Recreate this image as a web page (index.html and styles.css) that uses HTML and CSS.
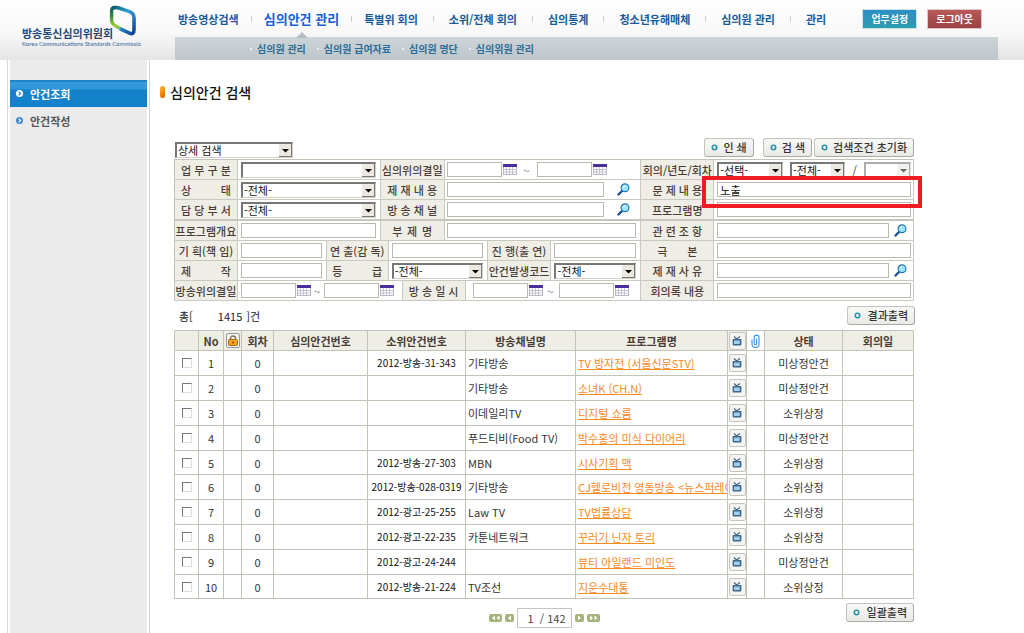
FILE: index.html
```html
<!DOCTYPE html>
<html lang="ko">
<head>
<meta charset="utf-8">
<title>심의안건 검색</title>
<link rel="stylesheet" href="styles.css">
</head>
<body>
<svg class="sprite" aria-hidden="true">
  <symbol id="cal" viewBox="0 0 14 11"><rect x=".5" y=".5" width="13" height="10" fill="#fff" stroke="#b9b9c9"/><path d="M0 0h14v3H0z" fill="#4a2f9c"/><path d="M3.500 3v7M6.500 3v7M9.500 3v7M1 5.500h12M1 8h12" stroke="#c3c3d2"/></symbol>
  <symbol id="mag" viewBox="0 0 13 13"><path d="M1.500 11.500L5 8" stroke="#1d4f9c" stroke-width="2.400" stroke-linecap="round"/><circle cx="8" cy="4.800" r="3.900" fill="#9fe6fb" stroke="#2277b5" stroke-width="1.200"/><path d="M6 4.500Q6.500 3 8 2.800" stroke="#fff" fill="none"/></symbol>
  <symbol id="tv" viewBox="0 0 10 10"><path d="M2 .5L4.500 3L8 .5" fill="none" stroke="#42627e" stroke-width="1.100"/><rect x=".6" y="3" width="8.800" height="6.400" rx=".8" fill="#41678a"/><rect x="2" y="4.500" width="5.800" height="3.500" fill="#9fd0ef"/></symbol>
  <symbol id="dot" viewBox="0 0 7 7"><circle cx="3.500" cy="3.500" r="2.200" fill="#fff" stroke="#2592ac" stroke-width="1.600"/></symbol>
  <symbol id="bullet" viewBox="0 0 7 7"><circle cx="3.500" cy="3.500" r="3.500" fill="currentColor"/><path d="M2.700 1.700l1.800 1.800l-1.800 1.800" fill="none" stroke="var(--mark)" stroke-width="1.200"/></symbol>
</svg>

<header class="header">
  <a class="logo" href="#">
    <svg class="logo-mark" viewBox="0 0 28 32" aria-hidden="true">
      <defs>
        <linearGradient id="lg" x1="0" y1="0" x2="1" y2="1"><stop offset="0" stop-color="#0b5a6c"/><stop offset=".4" stop-color="#2a9fd4"/><stop offset=".6" stop-color="#2e86cc"/><stop offset="1" stop-color="#0c3f93"/></linearGradient>
        <linearGradient id="lg2" x1="0" y1="0" x2="0" y2="1"><stop offset="0" stop-color="#0b5a5c"/><stop offset=".35" stop-color="#2f8c3c"/><stop offset=".8" stop-color="#a4d03c"/><stop offset="1" stop-color="#3f9ab0"/></linearGradient>
      </defs>
      <path d="M7 2.600Q2.600 1.800 2.600 6V15.500Q2.800 19 6 20.500L16 26" fill="none" stroke="url(#lg2)" stroke-width="3.400"/>
      <path d="M3.500 3.500Q5 1.900 9 2.800L20.500 6.600Q25 8.200 25 13V24.500Q25 30 20.500 28.200L11 23.800" fill="none" stroke="url(#lg)" stroke-width="3.600"/>
    </svg>
    <span class="logo-name">방송통신심의위원회</span>
    <span class="logo-sub">Korea Communications Standards Commissio</span>
  </a>
  <div class="header-main">
    <div class="topline">
      <nav class="nav">
        <a href="#">방송영상검색</a>
        <a href="#" class="current">심의안건 관리</a>
        <a href="#">특별위 회의</a>
        <a href="#">소위/전체 회의</a>
        <a href="#">심의통계</a>
        <a href="#">청소년유해매체</a>
        <a href="#">심의원 관리</a>
        <a href="#">관리</a>
      </nav>
      <div class="account">
        <button class="acct" type="button">업무설정</button>
        <button class="acct logout" type="button">로그아웃</button>
      </div>
    </div>
    <nav class="subnav">
      <a href="#">심의원 관리</a>
      <a href="#">심의원 급여자료</a>
      <a href="#">심의원 명단</a>
      <a href="#">심의위원 관리</a>
    </nav>
  </div>
</header>

<div class="body">
  <aside class="sidebar">
    <nav class="side-menu">
      <a class="side-link active" href="#"><svg class="i7"><use href="#bullet"/></svg>안건조회</a>
      <a class="side-link" href="#"><svg class="i7"><use href="#bullet"/></svg>안건작성</a>
    </nav>
  </aside>

  <main class="main">
    <h1 class="title">심의안건 검색</h1>

    <form class="search">
      <div class="toolbar">
        <select class="sel mode" aria-label="검색 방식"><option>상세 검색</option></select>
        <div class="actions">
          <button class="btn" type="button"><svg class="i7"><use href="#dot"/></svg>인 쇄</button>
          <button class="btn find" type="button"><svg class="i7"><use href="#dot"/></svg>검 색</button>
          <button class="btn" type="reset"><svg class="i7"><use href="#dot"/></svg>검색조건 초기화</button>
        </div>
      </div>

      <div class="fields">
        <div class="row r-a">
          <label for="f1">업 무 구 분</label>
          <div class="val"><select class="sel" id="f1"><option></option></select></div>
          <label for="f2">심의위의결일</label>
          <div class="val"><input class="date" id="f2"><svg class="cal"><use href="#cal"/></svg><span class="tilde wide">~</span><input class="date" aria-label="심의위의결일 끝"><svg class="cal"><use href="#cal"/></svg></div>
          <label for="f3">회의/년도/회차</label>
          <div class="val three"><select class="sel" id="f3"><option>-선택-</option></select><select class="sel" aria-label="년도"><option>-전체-</option></select><span>/</span><select class="sel off" aria-label="회차" disabled><option></option></select></div>
        </div>
        <div class="row r-a">
          <label for="f4"><span class="spread">상 태</span></label>
          <div class="val"><select class="sel" id="f4"><option>-전체-</option></select></div>
          <label for="f5">제 재 내 용</label>
          <div class="val lookup"><input id="f5"><svg class="mag"><use href="#mag"/></svg></div>
          <label for="f6">문 제 내 용</label>
          <div class="val marked"><input id="f6" value="노출"></div>
        </div>
        <div class="row r-a">
          <label for="f7">담 당 부 서</label>
          <div class="val"><select class="sel" id="f7"><option>-전체-</option></select></div>
          <label for="f8">방 송 채 널</label>
          <div class="val lookup"><input id="f8"><svg class="mag"><use href="#mag"/></svg></div>
          <label for="f9">프로그램명</label>
          <div class="val"><input id="f9"></div>
        </div>
        <div class="row r-a split">
          <label for="f10">프로그램개요</label>
          <div class="val"><input id="f10"></div>
          <label for="f11"><span class="spread short">부 제 명</span></label>
          <div class="val"><input id="f11"></div>
          <label for="f12">관 련 조 항</label>
          <div class="val lookup tight"><input id="f12"><svg class="mag"><use href="#mag"/></svg></div>
        </div>
        <div class="row r-b">
          <label for="f13">기 획(책 임)</label>
          <div class="val"><input id="f13"></div>
          <label for="f14">연 출(감 독)</label>
          <div class="val"><input id="f14"></div>
          <label for="f15">진 행(출 연)</label>
          <div class="val"><input id="f15"></div>
          <label for="f16"><span class="spread short">극 본</span></label>
          <div class="val"><input id="f16"></div>
        </div>
        <div class="row r-b">
          <label for="f17"><span class="spread">제 작</span></label>
          <div class="val"><input id="f17"></div>
          <label for="f18"><span class="spread">등 급</span></label>
          <div class="val"><select class="sel" id="f18"><option>-전체-</option></select></div>
          <label for="f19">안건발생코드</label>
          <div class="val"><select class="sel" id="f19"><option>-전체-</option></select></div>
          <label for="f20">제 재 사 유</label>
          <div class="val lookup tight"><input id="f20"><svg class="mag"><use href="#mag"/></svg></div>
        </div>
        <div class="row r-c">
          <label for="f21">방송위의결일</label>
          <div class="val"><input class="date" id="f21"><svg class="cal"><use href="#cal"/></svg><span class="tilde">~</span><input class="date" aria-label="방송위의결일 끝"><svg class="cal"><use href="#cal"/></svg></div>
          <label for="f22">방 송 일 시</label>
          <div class="val inset"><input class="date" id="f22"><svg class="cal"><use href="#cal"/></svg><span class="tilde mid">~</span><input class="date" aria-label="방송일시 끝"><svg class="cal"><use href="#cal"/></svg></div>
          <label for="f23">회의록 내용</label>
          <div class="val"><input id="f23"></div>
        </div>
      </div>
    </form>

    <div class="summary">
      <p class="total">총[<span class="count">1415</span>]건</p>
      <button class="btn" type="button"><svg class="i7"><use href="#dot"/></svg>결과출력</button>
    </div>

    <table class="list">
      <colgroup><col class="c-check"><col class="c-no"><col class="c-icon"><col class="c-round"><col class="c-case"><col class="c-sub"><col class="c-chan"><col class="c-prog"><col class="c-tv"><col class="c-icon"><col class="c-state"><col class="c-date"></colgroup>
      <thead>
        <tr>
          <th></th><th>No</th>
          <th class="icon"><span class="tile lock"><svg viewBox="0 0 10 11" width="10" height="11"><path d="M2.500 5V3.500a2.500 2.500 0 0 1 5 0V5" fill="none" stroke="#8b7650" stroke-width="1.400"/><rect x=".5" y="4.500" width="9" height="6" rx="1" fill="#f2a51c" stroke="#a8690c"/><circle cx="5" cy="7.500" r="1" fill="#b03c10"/></svg></span></th>
          <th>회차</th><th>심의안건번호</th><th>소위안건번호</th><th>방송채널명</th><th>프로그램명</th>
          <th class="icon"><span class="tile"><svg class="tv"><use href="#tv"/></svg></span></th>
          <th class="icon clip"><svg viewBox="0 0 9 14" width="9" height="14"><path d="M1 5.500V10a3.400 3.400 0 0 0 7 0V3.500a2.400 2.400 0 0 0-4.800 0V9.500a1.200 1.200 0 0 0 2.400 0V4.500" fill="none" stroke="#3d8fdc" stroke-width="1.100"/></svg></th>
          <th>상태</th><th>회의일</th>
        </tr>
      </thead>
      <tbody>
        <tr><td><input type="checkbox" aria-label="1"></td><td>1</td><td></td><td>0</td><td></td><td class="num">2012-방송-31-343</td><td class="l">기타방송</td><td class="l"><a href="#">TV 방자전 (서울신문STV)</a></td><td class="icon"><button class="tile" type="button" aria-label="영상"><svg class="tv"><use href="#tv"/></svg></button></td><td></td><td>미상정안건</td><td></td></tr>
        <tr><td><input type="checkbox" aria-label="2"></td><td>2</td><td></td><td>0</td><td></td><td class="num"></td><td class="l">기타방송</td><td class="l"><a href="#">소녀K (CH.N)</a></td><td class="icon"><button class="tile" type="button" aria-label="영상"><svg class="tv"><use href="#tv"/></svg></button></td><td></td><td>미상정안건</td><td></td></tr>
        <tr><td><input type="checkbox" aria-label="3"></td><td>3</td><td></td><td>0</td><td></td><td class="num"></td><td class="l">이데일리TV</td><td class="l"><a href="#">디지털 쇼룸</a></td><td class="icon"><button class="tile" type="button" aria-label="영상"><svg class="tv"><use href="#tv"/></svg></button></td><td></td><td>소위상정</td><td></td></tr>
        <tr><td><input type="checkbox" aria-label="4"></td><td>4</td><td></td><td>0</td><td></td><td class="num"></td><td class="l">푸드티비(Food TV)</td><td class="l"><a href="#">박수홍의 미식 다이어리</a></td><td class="icon"><button class="tile" type="button" aria-label="영상"><svg class="tv"><use href="#tv"/></svg></button></td><td></td><td>미상정안건</td><td></td></tr>
        <tr><td><input type="checkbox" aria-label="5"></td><td>5</td><td></td><td>0</td><td></td><td class="num">2012-방송-27-303</td><td class="l">MBN</td><td class="l"><a href="#">시사기획 맥</a></td><td class="icon"><button class="tile" type="button" aria-label="영상"><svg class="tv"><use href="#tv"/></svg></button></td><td></td><td>소위상정</td><td></td></tr>
        <tr><td><input type="checkbox" aria-label="6"></td><td>6</td><td></td><td>0</td><td></td><td class="num">2012-방송-028-0319</td><td class="l">기타방송</td><td class="l"><a href="#">CJ헬로비전 영동방송 &lt;뉴스퍼레이드&gt;</a></td><td class="icon"><button class="tile" type="button" aria-label="영상"><svg class="tv"><use href="#tv"/></svg></button></td><td></td><td>소위상정</td><td></td></tr>
        <tr><td><input type="checkbox" aria-label="7"></td><td>7</td><td></td><td>0</td><td></td><td class="num">2012-광고-25-255</td><td class="l">Law TV</td><td class="l"><a href="#">TV법률상담</a></td><td class="icon"><button class="tile" type="button" aria-label="영상"><svg class="tv"><use href="#tv"/></svg></button></td><td></td><td>소위상정</td><td></td></tr>
        <tr><td><input type="checkbox" aria-label="8"></td><td>8</td><td></td><td>0</td><td></td><td class="num">2012-광고-22-235</td><td class="l">카툰네트워크</td><td class="l"><a href="#">꾸러기 닌자 토리</a></td><td class="icon"><button class="tile" type="button" aria-label="영상"><svg class="tv"><use href="#tv"/></svg></button></td><td></td><td>소위상정</td><td></td></tr>
        <tr><td><input type="checkbox" aria-label="9"></td><td>9</td><td></td><td>0</td><td></td><td class="num">2012-광고-24-244</td><td class="l"></td><td class="l"><a href="#">뷰티 아일랜드 미인도</a></td><td class="icon"><button class="tile" type="button" aria-label="영상"><svg class="tv"><use href="#tv"/></svg></button></td><td></td><td>미상정안건</td><td></td></tr>
        <tr><td><input type="checkbox" aria-label="10"></td><td>10</td><td></td><td>0</td><td></td><td class="num">2012-방송-21-224</td><td class="l">TV조선</td><td class="l"><a href="#">지운수대통</a></td><td class="icon"><button class="tile" type="button" aria-label="영상"><svg class="tv"><use href="#tv"/></svg></button></td><td></td><td>소위상정</td><td></td></tr>
      </tbody>
    </table>

    <div class="footer">
      <div class="pager">
        <button type="button" class="pg" aria-label="처음"><svg width="13" height="8" viewBox="0 0 13 8"><path d="M6 1.500L3 4l3 2.500zM10.500 1.500L7.500 4l3 2.500z" fill="#fff"/></svg></button>
        <button type="button" class="pg" aria-label="이전"><svg width="9" height="8" viewBox="0 0 9 8"><path d="M6 1.500L3 4l3 2.500z" fill="#fff"/></svg></button>
        <span class="page"><span>1</span><span>/ 142</span></span>
        <button type="button" class="pg" aria-label="다음"><svg width="9" height="8" viewBox="0 0 9 8"><path d="M3 1.500L6 4L3 6.500z" fill="#fff"/></svg></button>
        <button type="button" class="pg" aria-label="마지막"><svg width="13" height="8" viewBox="0 0 13 8"><path d="M3 1.500L6 4L3 6.500zM7.500 1.500l3 2.500l-3 2.500z" fill="#fff"/></svg></button>
      </div>
      <button class="btn" type="button"><svg class="i7"><use href="#dot"/></svg>일괄출력</button>
    </div>
  </main>
</div>
</body>
</html>
```
FILE: styles.css
```css
* { box-sizing: border-box; }

body {
  margin: 0;
  min-height: 100vh;
  display: flex;
  flex-direction: column;
  background: #fff;
  color: #333;
  font: 11px/16px "Noto Sans CJK KR", "Liberation Sans", sans-serif;
}

button, input, select { font: inherit; color: inherit; margin: 0; }
button { cursor: pointer; }
a { text-decoration: none; color: inherit; }
svg { display: block; flex: none; }
.sprite { position: absolute; width: 0; height: 0; }
.i7 { width: 7px; height: 7px; }

/* header */
.header {
  display: flex;
  height: 60px;
  padding-right: 26px;
  background: linear-gradient(#fff, #f8f8f8 55%, #e4e4e4);
}
.logo {
  position: relative;
  flex: none;
  width: 175px;
  padding: 26px 0 0 22px;
  display: flex;
  flex-direction: column;
}
.logo-mark { position: absolute; left: 109px; top: 5px; width: 28px; height: 32px; }
.logo-name { font-size: 11px; line-height: 14px; font-weight: bold; color: #1f4a78; }
.logo-sub { font: 6px/8px Lato, "Liberation Sans", sans-serif; color: #2f659c; white-space: nowrap; }
.header-main { flex: 1; min-width: 0; }
.topline {
  display: flex;
  justify-content: space-between;
  align-items: center;
  height: 37px;
  padding: 0 16px 0 3px;
}
.nav { display: flex; align-items: center; font-weight: bold; color: #155a9c; white-space: nowrap; }
.nav a { display: flex; align-items: center; }
.nav a + a::before { content: ""; width: 1px; height: 6px; margin: 0 15px; background: #ccc; }
.nav a.current { position: relative; font-size: 13px; color: #1660d6; }
.nav a.current::before, .nav a.current + a::before { margin: 0 12px; }
.nav a.current::after {
  content: "";
  position: absolute;
  left: 57px;
  top: 21px;
  border: 6px solid transparent;
  border-top: 0;
  border-bottom-color: #b3bcc2;
}
.account { display: flex; gap: 10px; }
.acct {
  height: 20px;
  padding: 0 8px;
  border: 1px solid #cfe0e6;
  background: linear-gradient(#2c8fc4, #2e9cae);
  color: #fff;
  font-size: 10px;
  line-height: 16px;
  font-weight: bold;
}
.acct.logout { border-color: #dcc9c9; background: linear-gradient(#b95a58, #9a4046); }
.subnav {
  display: flex;
  align-items: center;
  gap: 11px;
  height: 23px;
  padding-left: 75px;
  background: linear-gradient(#cdd4d7, #bdc6ca);
  color: #2b6d98;
  font-size: 10px;
  font-weight: bold;
}
.subnav a { display: flex; align-items: center; gap: 5px; }
.subnav a::before { content: ""; width: 2px; height: 2px; background: #eef2f3; }

/* layout */
.body { flex: 1; display: flex; }
.sidebar {
  flex: none;
  width: 151px;
  padding: 0 3px 0 9px;
  background: linear-gradient(90deg, #fff 7px, #d8d8d8 7px 8px, #fff 8px 10px, #ebebeb 10px 147px, #fff 147px 149px, #d4d4d4 149px 150px, #fff 150px);
}
.side-menu { padding: 20px 1px 0; }
.side-link {
  --mark: #fff;
  display: flex;
  align-items: center;
  gap: 7px;
  height: 27px;
  padding-left: 6px;
  font-weight: bold;
}
.side-link:not(.active) { color: #555; }
.side-link:not(.active) svg { color: #3f88cc; }
.side-link.active {
  --mark: #1a83cd;
  color: #fff;
  background: linear-gradient(#1c86cc 0 2px, #369cdc 2px, #2f96d8 9px, #1482cb 10px);
}
.main { flex: 1; min-width: 0; padding: 22px 110px 0 23px; }
.title {
  display: flex;
  align-items: center;
  gap: 5px;
  margin: 0 0 0 -14px;
  font-size: 14px;
  line-height: 20px;
  font-weight: 500;
  color: #111;
}
.title::before {
  content: "";
  width: 5px;
  height: 12px;
  border-radius: 2px;
  background: linear-gradient(135deg, #ffc04a, #f08010 60%, #d86800);
}

/* controls */
.btn {
  display: inline-flex;
  align-items: center;
  gap: 5px;
  height: 19px;
  padding: 0 6px;
  border: 1px solid #c4c4bf;
  border-right-color: #a9a9a5;
  border-bottom-color: #a9a9a5;
  border-radius: 3px;
  background: linear-gradient(#f8f8f6, #e9e9e6);
  color: #333;
  font-weight: 500;
  line-height: 15px;
  white-space: nowrap;
}
.sel {
  appearance: none;
  width: 100%;
  min-width: 0;
  height: 16px;
  padding: 0 14px 0 1px;
  border: 1px solid #d4d0c8;
  border-top: 2px solid #777;
  border-left: 2px solid #777;
  border-radius: 0;
  color: #111;
  line-height: 13px;
  background: #fff url("data:image/svg+xml,%3Csvg xmlns='http://www.w3.org/2000/svg' width='13' height='13'%3E%3Cpath fill='%23ece9e2' d='M0 0h13v13H0z'/%3E%3Cpath fill='none' stroke='%23777' d='M0 12.500h12.500V0'/%3E%3Cpath d='M3 5h7L6.500 8.500z'/%3E%3C/svg%3E") right center no-repeat;
}
.sel.off { opacity: 0.6; }
.fields input {
  width: 100%;
  min-width: 0;
  height: 15px;
  padding: 0 2px;
  border: 1px solid #b9b9ae;
  background: #fff;
  color: #111;
  line-height: 13px;
}

/* search form */
.toolbar { display: flex; align-items: flex-end; justify-content: space-between; margin-top: 36px; padding-bottom: 1px; }
.mode { width: 118px; margin-left: 1px; }
.actions { display: flex; gap: 2px; margin-bottom: 1px; }
.find { margin-left: 7px; }
.fields { border: solid #c3c3b8; border-width: 1px 0 0 1px; }
.row { display: grid; height: 20px; }
.r-a { grid-template-columns: 63fr 143fr 64fr 197fr 73fr 200fr; }
.r-b { grid-template-columns: 63fr 89fr 62fr 99fr 64fr 90fr 73fr 200fr; }
.r-c { grid-template-columns: 63fr 165fr 63fr 176fr 73fr 200fr; }
.row.split { height: 21px; border-top: 1px solid #c3c3b8; }
.row > * { min-width: 0; border: solid #c9c9bf; border-width: 0 1px 1px 0; }
.row > label {
  display: flex;
  align-items: center;
  justify-content: center;
  background: #efeee6;
  color: #4a3d36;
  font-weight: 500;
  line-height: 14px;
  white-space: nowrap;
}
.spread { width: 50px; text-align-last: justify; }
.spread.short { width: 40px; }
.val { display: flex; align-items: center; padding: 0 4px 0 3px; }
.r-a .val:nth-child(4) { padding-left: 2px; }
.row .val:last-child { padding: 0 2px 0 3px; }
.fields input.date { flex: none; width: 55px; }
.cal { width: 14px; height: 11px; margin-left: 1px; }
.tilde { width: 13px; text-align: center; color: #777; }
.tilde.mid { width: 16px; }
.tilde.wide { width: 20px; }
.row .inset { padding-left: 7px; }
.mag { width: 13px; height: 13px; margin: 0 6px 0 13px; }
.tight .mag { margin: 0 4px 0 5px; }
.three { gap: 7px; }
.three .sel:nth-child(1) { flex: 70; }
.three .sel:nth-child(2) { flex: 55; }
.three .sel:nth-child(4) { flex: 43; }
.marked { position: relative; }
.marked::after {
  content: "";
  position: absolute;
  inset: -4px -9px -9px -12px;
  border: 4px solid #ed1c24;
  pointer-events: none;
}

/* results */
.summary { display: flex; align-items: center; justify-content: space-between; margin: 5px -1px 5px 5px; }
.total { margin: 0; color: #222; }
.count { margin: 0 4px 0 25px; }
.list { width: 100%; table-layout: fixed; border-collapse: collapse; }
.c-check { width: 24px; }
.c-no { width: 25px; }
.c-icon { width: 18px; }
.c-tv { width: 19px; }
.c-round { width: 32px; }
.c-case { width: 94px; }
.c-sub { width: 98px; }
.c-chan { width: 110px; }
.c-state { width: 78px; }
.c-date { width: 71px; }
.list th, .list td {
  height: 25px;
  padding: 0;
  border: 1px solid #c3c3b8;
  overflow: hidden;
  text-align: center;
  white-space: nowrap;
}
.list th { height: 20px; background: #efeee6; color: #4a3d36; font-weight: bold; }
.list tr:nth-child(5n) td { height: 24px; }
.list .l { padding-left: 2px; text-align: left; }
.list .num { font-size: 10px; color: #111; }
.list a { color: #f58a1f; text-decoration: underline; }
.list input {
  appearance: none;
  display: block;
  width: 10px;
  height: 10px;
  margin: 0 auto;
  border: 1px solid #ddd;
  border-top-color: #777;
  border-left-color: #777;
}
.tile {
  display: flex;
  align-items: center;
  justify-content: center;
  width: 17px;
  height: 18px;
  margin: 0 auto;
  padding: 0;
  border: 1px solid #c4c4c0;
  border-radius: 2px;
  background: #f4f4f2;
}
.tile.lock { width: 14px; height: 15px; border-color: #999; }
.tv { width: 10px; height: 10px; }
.list .clip { background: #fff; }
.clip svg { margin: 0 auto; }

/* paging */
.footer { display: grid; grid-template-columns: 1fr auto 1fr; align-items: start; padding-top: 4px; }
.footer > .btn { grid-column: 3; justify-self: end; }
.pager { grid-column: 2; display: flex; align-items: center; gap: 3px; margin-top: 5px; }
.pg { padding: 0; border: 0; border-radius: 2px; background: #a4b37c; }
.page { display: flex; justify-content: space-between; width: 55px; height: 20px; padding: 1px 5px 0 10px; border: 1px solid #c4c4c4; color: #444; }
.summary .btn, .footer > .btn { gap: 7px; }
```
